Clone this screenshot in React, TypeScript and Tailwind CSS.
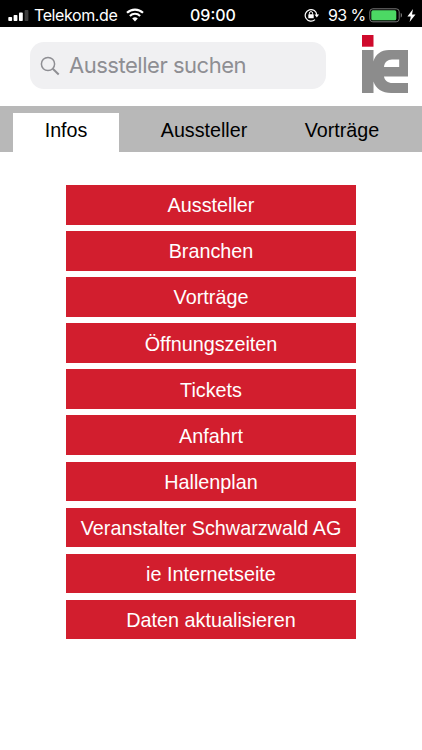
import React, { useState } from "react";

const tabs = [
  { label: "Infos", className: "ml-[13px] w-[106px]" },
  { label: "Aussteller", className: "ml-4 w-[138px]" },
  { label: "Vorträge", className: "w-[138px]" },
];

const menuItems = [
  "Aussteller",
  "Branchen",
  "Vorträge",
  "Öffnungszeiten",
  "Tickets",
  "Anfahrt",
  "Hallenplan",
  "Veranstalter Schwarzwald AG",
  "ie Internetseite",
  "Daten aktualisieren",
];

const SignalIcon = () => (
  <svg className="h-[11px] w-[22px]" viewBox="0 0 22 11" fill="#fff">
    <rect x="0.3" y="7" width="3.8" height="4" rx="0.8" />
    <rect x="5.6" y="5" width="3.8" height="6" rx="0.8" />
    <rect x="11" y="2.6" width="3.8" height="8.4" rx="0.8" />
    <rect x="16.6" y="0" width="3.8" height="11" rx="0.8" fill="#3c3c3c" />
  </svg>
);

const WifiIcon = () => (
  <svg className="h-[14px] w-[18px]" viewBox="0 0 18 14" fill="none">
    <path d="M1 4.8a11.5 11.5 0 0 1 16 0" stroke="#fff" strokeWidth="2.2" />
    <path d="M3.9 7.9a7.3 7.3 0 0 1 10.2 0" stroke="#fff" strokeWidth="2.1" />
    <path d="M9 13.4L6.2 10.5a4 4 0 0 1 5.6 0z" fill="#fff" />
  </svg>
);

const RotationLockIcon = () => (
  <svg className="h-[14px] w-[16px]" viewBox="0 0 16 14" fill="none">
    <path
      d="M11 11.6A5.8 5.8 0 1 1 12.8 7"
      stroke="#fff"
      strokeWidth="1.2"
    />
    <path d="M10.5 6.5h4.6l-2.3 3z" fill="#fff" />
    <rect x="4.3" y="6.2" width="5.4" height="4" rx="0.5" fill="#fff" />
    <path d="M5.4 6.5V5.2a1.6 1.6 0 0 1 3.2 0v1.3" stroke="#fff" />
  </svg>
);

const BatteryIcon = () => (
  <svg className="h-[15px] w-[35px]" viewBox="0 0 35 15" fill="none">
    <rect x="0.8" y="0.8" width="29.4" height="13" rx="3" stroke="#777" />
    <rect x="2.3" y="2.3" width="25" height="10" rx="1.6" fill="#4cd964" />
    <path d="M31.7 5v4.6c1.8-.5 1.8-4.1 0-4.6z" fill="#777" />
  </svg>
);

const BoltIcon = () => (
  <svg className="h-[13px] w-[9px]" viewBox="0 0 9 13" fill="#fff">
    <path d="M6 0L0.4 7.4h3.4L2.6 13l5.9-7.6H5z" />
  </svg>
);

const SearchIcon = () => (
  <svg className="h-5 w-5" viewBox="0 0 20 20" fill="none" stroke="#8e8e93">
    <circle cx="8" cy="8" r="6.6" strokeWidth="1.5" />
    <path d="M12.8 12.8l5.9 5.7" strokeWidth="2" />
  </svg>
);

const Logo = () => (
  <svg className="h-[58px] w-[46px]" viewBox="0 0 46 58">
    <path d="M0 0h11.5v11.7H0z" fill="#cf0a2c" />
    <path
      d="M0 15h11.5v11.5C13.2 19.5 19 15 27 15h19v26.5H22c.6 4 3.8 6.5 8.5 6.500H46v10H29c-8.500 0-15.500-4.500-17.500-11.500V58H0z"
      fill="#8c8c8c"
    />
    <path d="M22 32c.4-4.500 3.500-7.400 8-7.400h7.200V32z" fill="#fff" />
  </svg>
);

export default function App() {
  const [activeTab, setActiveTab] = useState("Infos");
  const [query, setQuery] = useState("");

  return (
    <div className="flex h-[750px] w-[422px] flex-col overflow-hidden bg-white font-['Liberation_Sans',sans-serif]">
      <div className="flex h-[27px] shrink-0 items-center justify-between bg-black pt-[3px] font-[Inter,sans-serif] text-white">
        <div className="flex w-[190px] items-center pl-2">
          <SignalIcon />
          <span className="ml-1 w-[84px] whitespace-nowrap text-[16px] leading-6 tracking-[-0.4px]">
            Telekom.de
          </span>
          <span className="ml-[8px]">
            <WifiIcon />
          </span>
        </div>
        <span className="w-[50px] text-[16px] font-medium leading-6">
          09:00
        </span>
        <div className="flex flex-1 items-center justify-end pr-[6px]">
          <RotationLockIcon />
          <span className="ml-2 w-[37px] whitespace-nowrap text-[16px] leading-6 tracking-[-0.6px]">
            93 %
          </span>
          <span className="ml-1">
            <BatteryIcon />
          </span>
          <span className="ml-[3px]">
            <BoltIcon />
          </span>
        </div>
      </div>

      <header className="flex h-[79px] shrink-0 items-start justify-between pl-[30px] pr-[14px] pt-2">
        <label className="mt-[7px] flex h-[47px] w-[296px] items-center rounded-[14px] bg-[#f0f0f2] pl-[10px]">
          <SearchIcon />
          <input
            className="ml-[9px] w-[230px] bg-transparent font-[Inter,sans-serif] text-[22px] tracking-[-0.48px] text-[#8e8e93] outline-none placeholder:text-[#8e8e93]"
            placeholder="Aussteller suchen"
            value={query}
            onChange={({ target }) => setQuery(target.value)}
          />
        </label>
        <Logo />
      </header>

      <nav className="flex h-[46px] shrink-0 items-stretch bg-[#b8b8b8] pt-[7px]">
        {tabs.map(({ label, className }) => (
          <button
            key={label}
            onClick={() => setActiveTab(label)}
            className={`${className} pb-[4px] text-[19.7px] text-black ${
              activeTab === label ? "bg-white" : ""
            }`}
          >
            {label}
          </button>
        ))}
      </nav>

      <main className="mx-auto mt-[33px] flex w-[290px] flex-col gap-[6.6px]">
        {menuItems.map((item) => (
          <button
            key={item}
            className="h-[39.5px] shrink-0 whitespace-nowrap bg-[#d21e2e] pt-px text-[19.8px] leading-6 text-white"
          >
            {item}
          </button>
        ))}
      </main>
    </div>
  );
}
